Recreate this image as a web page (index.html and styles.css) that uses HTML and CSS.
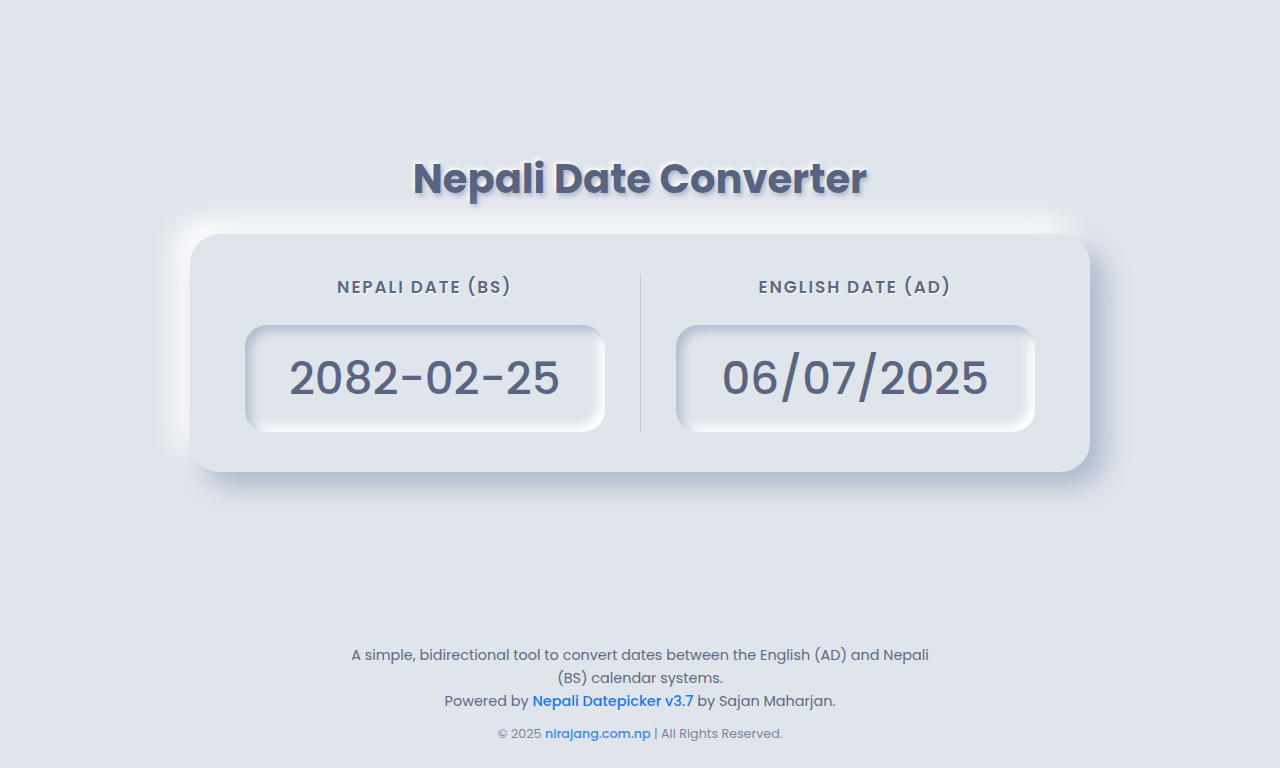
FILE: index.html
```html
<!DOCTYPE html>
<html lang="en">
<head>
<meta charset="utf-8">
<title>Nepali Date Converter</title>
<link rel="stylesheet" href="styles.css">
</head>
<body>
<div class="page">
  <main class="main">
    <h1 class="title">Nepali Date Converter</h1>
    <section class="card">
      <div class="col">
        <label class="label">Nepali Date (BS)</label>
        <div class="field">2082-02-25</div>
      </div>
      <div class="divider"></div>
      <div class="col">
        <label class="label">English Date (AD)</label>
        <div class="field">06/07/2025</div>
      </div>
    </section>
  </main>
  <footer class="footer">
    <p class="desc">A simple, bidirectional tool to convert dates between the English (AD) and Nepali<br>(BS) calendar systems.<br>Powered by <a class="link" href="#">Nepali Datepicker v3.7</a> by Sajan Maharjan.</p>
    <p class="copy">© 2025 <a class="link link-light" href="#">nirajang.com.np</a> | All Rights Reserved.</p>
  </footer>
</div>
</body>
</html>
```

FILE: styles.css
```css
* { box-sizing: border-box; }
html, body { margin: 0; padding: 0; }
body {
  background: #e0e5ec;
  font-family: "Poppins", "Inter", "DejaVu Sans", sans-serif;
  color: #5a6480;
  width: 1280px;
  height: 768px;
  overflow: hidden;
}
.page {
  height: 768px;
  display: flex;
  flex-direction: column;
  align-items: center;
}
.main {
  display: flex;
  flex-direction: column;
  align-items: center;
  padding-top: 152px;
}
.title {
  margin: 0 0 28px;
  font-size: 40px;
  line-height: 54px;
  font-weight: 700;
  letter-spacing: 0;
  color: #586380;
  text-shadow: 2px 3px 4px rgba(163,177,198,0.85), -2px -2px 4px #ffffff;
}
.card {
  width: 900px;
  height: 238px;
  padding: 40px;
  border-radius: 30px;
  background: #e0e5ec;
  box-shadow: 14px 14px 28px #abb8cc, -14px -14px 28px #ffffff;
  display: grid;
  grid-template-columns: 1fr 1px 1fr;
  column-gap: 20px;
}
.col {
  display: flex;
  flex-direction: column;
  align-items: center;
  padding: 0 15px;
}
.label {
  font-size: 17px;
  font-weight: 600;
  letter-spacing: 1.85px;
  text-transform: uppercase;
  color: #5f6985;
  line-height: 26px;
  text-shadow: 1px 1px 1px #ffffff;
  margin-bottom: 25px;
}
.field {
  width: 100%;
  height: 107px;
  border-radius: 22px;
  background: #e0e5ec;
  box-shadow: inset 6px 6px 10px #b3bfd0, inset -6px -6px 10px #ffffff;
  display: flex;
  align-items: center;
  justify-content: center;
  font-size: 45px;
  font-weight: 500;
  color: #5b6581;
  letter-spacing: 0;
}
.divider {
  background: #c5cddb;
  width: 1px;
  height: 158px;
}
.footer {
  margin-top: auto;
  padding-bottom: 24px;
  text-align: center;
}
.desc {
  margin: 0;
  font-size: 14.4px;
  line-height: 23px;
  color: #5f6985;
}
.copy {
  margin: 11px 0 0;
  font-size: 12.7px;
  line-height: 20px;
  color: #7c869f;
}
.link {
  color: #1a7ae6;
  font-weight: 500;
  text-decoration: none;
}
.link-light {
  color: #3d8ae8;
}
```
